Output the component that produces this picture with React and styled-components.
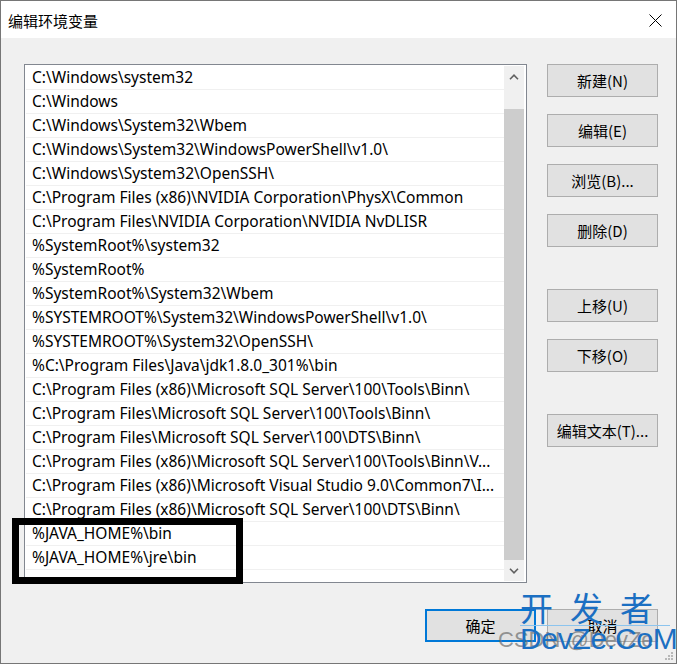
import React from 'react'
import styled, { createGlobalStyle } from 'styled-components'

const GlobalStyle = createGlobalStyle`
  html, body {
    margin: 0;
    padding: 0;
    background: #ffffff;
  }
  * {
    box-sizing: border-box;
  }
`;

const uiFont = `"Noto Sans", "Noto Sans CJK SC", sans-serif`;
const cjkFont = `"Noto Sans CJK SC", "Noto Sans", sans-serif`;

const Window = styled.div`
  position: relative;
  width: 677px;
  height: 664px;
  border: 1px solid #767676;
  display: flex;
  flex-direction: column;
  background: #f0f0f0;
  font-family: ${uiFont};
  color: #000;
  overflow: hidden;
`;

const TitleBar = styled.div`
  height: 37px;
  background: #ffffff;
  display: flex;
  align-items: center;
  justify-content: space-between;
  padding: 2px 14px 0 7px;
  font-family: ${cjkFont};
  font-size: 15px;
`;

const Body = styled.div`
  flex: 1;
  display: flex;
  flex-direction: column;
  padding: 26px 18px 21px 23px;
`;

const MainRow = styled.div`
  display: flex;
  gap: 20px;
`;

const ListBox = styled.div`
  width: 503px;
  height: 519px;
  border: 1px solid #828790;
  background: #ffffff;
  padding: 1px;
  display: flex;
`;

const Rows = styled.div`
  flex: 1;
  display: flex;
  flex-direction: column;
  overflow: hidden;
`;

const Row = styled.div`
  height: 24px;
  flex-shrink: 0;
  border-bottom: 1px solid #f0f0f0;
  display: flex;
  align-items: center;
  padding: 0 0 1px 6px;
  font-size: 15.5px;
  white-space: nowrap;
  overflow: hidden;
`;

const ScrollBar = styled.div`
  width: 20px;
  display: flex;
  flex-direction: column;
  background: #f0f0f0;
  margin-right: 1px;
`;

const ScrollArrow = styled.div`
  height: 21px;
  display: flex;
  align-items: center;
  justify-content: center;
`;

const ScrollTrack = styled.div`
  flex: 1;
  display: flex;
  flex-direction: column;
  padding-top: 22px;
`;

const ScrollThumb = styled.div`
  flex: 1;
  background: #cdcdcd;
`;

const SideButtons = styled.div`
  display: flex;
  flex-direction: column;
`;

const Button = styled.div`
  width: 111px;
  height: 33px;
  margin-top: ${p => p.$gap || 0}px;
  background: #e1e1e1;
  border: ${p => (p.$default ? '2px solid #0078d7' : '1px solid #adadad')};
  display: flex;
  align-items: center;
  justify-content: center;
  font-family: ${cjkFont};
  font-size: 15px;
  padding-bottom: 1px;
`;

const Footer = styled.div`
  margin-top: 26px;
  display: flex;
  justify-content: flex-end;
  gap: 11px;
`;

const Annotation = styled.div`
  position: absolute;
  left: 11px;
  top: 517px;
  width: 231px;
  height: 66px;
  border: 7px solid #000;
`;

const Watermark = styled.div`
  position: absolute;
  left: 519px;
  top: 588px;
  width: 150px;
  display: flex;
  flex-direction: column;
  color: #1b6fc2;
  pointer-events: none;
`;

const WatermarkCjk = styled.div`
  font-family: ${cjkFont};
  font-size: 33px;
  line-height: 36px;
  letter-spacing: 17px;
  white-space: nowrap;
  border-bottom: 1px solid #8cc4ee;
`;

const WatermarkLatin = styled.div`
  font-family: "Liberation Sans", sans-serif;
  font-size: 30px;
  line-height: 26px;
  letter-spacing: -0.3px;
  white-space: nowrap;
`;

const CsdnMark = styled.div`
  position: absolute;
  left: 497px;
  top: 626px;
  font-family: "Liberation Sans", sans-serif;
  font-size: 22px;
  color: rgba(110, 110, 110, 0.7);
  white-space: nowrap;
`;

const Grip = styled.svg`
  position: absolute;
  right: 3px;
  bottom: 3px;
`;

const paths = [
  'C:\\Windows\\system32',
  'C:\\Windows',
  'C:\\Windows\\System32\\Wbem',
  'C:\\Windows\\System32\\WindowsPowerShell\\v1.0\\',
  'C:\\Windows\\System32\\OpenSSH\\',
  'C:\\Program Files (x86)\\NVIDIA Corporation\\PhysX\\Common',
  'C:\\Program Files\\NVIDIA Corporation\\NVIDIA NvDLISR',
  '%SystemRoot%\\system32',
  '%SystemRoot%',
  '%SystemRoot%\\System32\\Wbem',
  '%SYSTEMROOT%\\System32\\WindowsPowerShell\\v1.0\\',
  '%SYSTEMROOT%\\System32\\OpenSSH\\',
  '%C:\\Program Files\\Java\\jdk1.8.0_301%\\bin',
  'C:\\Program Files (x86)\\Microsoft SQL Server\\100\\Tools\\Binn\\',
  'C:\\Program Files\\Microsoft SQL Server\\100\\Tools\\Binn\\',
  'C:\\Program Files\\Microsoft SQL Server\\100\\DTS\\Binn\\',
  'C:\\Program Files (x86)\\Microsoft SQL Server\\100\\Tools\\Binn\\V...',
  'C:\\Program Files (x86)\\Microsoft Visual Studio 9.0\\Common7\\I...',
  'C:\\Program Files (x86)\\Microsoft SQL Server\\100\\DTS\\Binn\\',
  '%JAVA_HOME%\\bin',
  '%JAVA_HOME%\\jre\\bin',
]

const sideButtons = [
  { label: '新建(N)', gap: 0 },
  { label: '编辑(E)', gap: 17 },
  { label: '浏览(B)...', gap: 17 },
  { label: '删除(D)', gap: 17 },
  { label: '上移(U)', gap: 42 },
  { label: '下移(O)', gap: 17 },
  { label: '编辑文本(T)...', gap: 42 },
]

function Chevron({ up }) {
  return (
    <svg width="10" height="6" viewBox="0 0 10 6">
      <path
        d={up ? 'M1 5.2 L5 1.2 L9 5.2' : 'M1 0.8 L5 4.8 L9 0.8'}
        fill="none"
        stroke="#606060"
        strokeWidth="1.6"
      />
    </svg>
  )
}

export default function App() {
  return (
    <>
      <GlobalStyle />
      <Window>
        <TitleBar>
          <span>编辑环境变量</span>
          <svg width="13" height="13" viewBox="0 0 13 13">
            <path d="M0.5 0.5 L12.5 12.5 M12.5 0.5 L0.5 12.5" stroke="#000" strokeWidth="1" />
          </svg>
        </TitleBar>
        <Body>
          <MainRow>
            <ListBox>
              <Rows>
                {paths.map(p => (
                  <Row key={p}>{p}</Row>
                ))}
              </Rows>
              <ScrollBar>
                <ScrollArrow><Chevron up /></ScrollArrow>
                <ScrollTrack>
                  <ScrollThumb />
                </ScrollTrack>
                <ScrollArrow><Chevron /></ScrollArrow>
              </ScrollBar>
            </ListBox>
            <SideButtons>
              {sideButtons.map(b => (
                <Button key={b.label} $gap={b.gap}>{b.label}</Button>
              ))}
            </SideButtons>
          </MainRow>
          <Footer>
            <Button $default>确定</Button>
            <Button>取消</Button>
          </Footer>
        </Body>
        <Annotation />
        <CsdnMark>CSDN @DevZe</CsdnMark>
        <Watermark>
          <WatermarkCjk>开发者</WatermarkCjk>
          <WatermarkLatin>DevZe.CoM</WatermarkLatin>
        </Watermark>
        <Grip width="9" height="9" viewBox="0 0 9 9">
          <rect x="7" y="1" width="2" height="2" fill="#b8b8b8" />
          <rect x="4" y="4" width="2" height="2" fill="#b8b8b8" />
          <rect x="7" y="4" width="2" height="2" fill="#b8b8b8" />
          <rect x="1" y="7" width="2" height="2" fill="#b8b8b8" />
          <rect x="4" y="7" width="2" height="2" fill="#b8b8b8" />
          <rect x="7" y="7" width="2" height="2" fill="#b8b8b8" />
        </Grip>
      </Window>
    </>
  )
}
